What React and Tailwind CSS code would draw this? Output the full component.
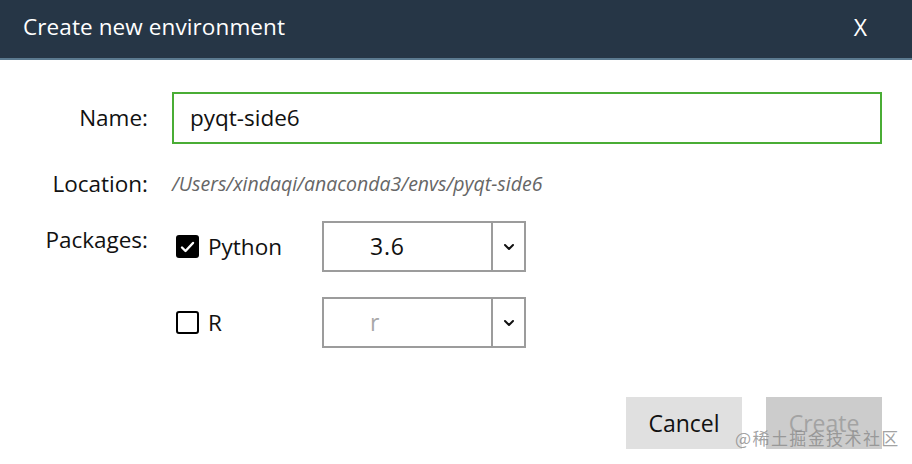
import React from "react";

const font = { fontFamily: '"Open Sans", "Noto Sans", sans-serif' };

function Chevron() {
  return (
    <svg width="12" height="8" viewBox="0 0 12 8" className="block">
      <path d="M2 2 L6 6 L10 2" fill="none" stroke="#111" strokeWidth="2" strokeLinecap="round" strokeLinejoin="round" />
    </svg>
  );
}

function Combo({ value, muted }) {
  return (
    <div className="flex w-[204px] h-[51px] border-2 border-[#9c9c9c] bg-white">
      <div className={"flex-1 flex items-center pl-[46px] text-[23px] tracking-[0.8px] " + (muted ? "text-[#a8a8a8]" : "text-[#111]")}>{value}</div>
      <div className="w-[33px] border-l-2 border-[#9c9c9c] flex items-center justify-center">
        <Chevron />
      </div>
    </div>
  );
}

export default function App() {
  return (
    <div className="relative w-[912px] h-[464px] bg-white overflow-hidden" style={font}>
      <div className="h-[60px] bg-[#263646] border-b-2 border-[#5b7a90] flex items-center justify-between pl-[23px] pr-[45px]">
        <span className="text-white text-[22.5px] leading-none tracking-[0.1px] pb-[4px]">Create new environment</span>
        <span className="text-white text-[23px] leading-none pb-[4px]">X</span>
      </div>

      <div className="pt-[32px] pr-[30px]">
        <div className="flex items-center h-[52px]">
          <div className="w-[148px] text-right text-[22.5px] text-[#111]">Name:</div>
          <div className="ml-[24px] flex-1 h-[52px] border-2 border-[#4aad35] flex items-center pl-[16px] text-[22.5px] text-[#111]">pyqt-side6</div>
        </div>

        <div className="flex items-center h-[40px] mt-[20px]">
          <div className="w-[148px] text-right text-[22.5px] text-[#111]">Location:</div>
          <div className="ml-[24px] text-[19.5px] italic text-[#666]">/Users/xindaqi/anaconda3/envs/pyqt-side6</div>
        </div>

        <div className="flex mt-[17px]">
          <div className="w-[148px] text-right text-[22.5px] text-[#111] pt-[4px] leading-[30px]">Packages:</div>
          <div className="ml-[28px] flex flex-col">
            <div className="flex items-center h-[51px]">
              <div className="w-[23px] h-[23px] rounded-[3px] bg-black flex items-center justify-center">
                <svg width="15" height="12" viewBox="0 0 15 12">
                  <path d="M2 6.5 L5.5 10 L13 2" fill="none" stroke="#fff" strokeWidth="2.4" strokeLinecap="round" strokeLinejoin="round" />
                </svg>
              </div>
              <span className="ml-[9px] w-[114px] text-[22.5px] text-[#111]">Python</span>
              <Combo value="3.6" />
            </div>
            <div className="flex items-center h-[51px] mt-[25px]">
              <div className="w-[23px] h-[23px] rounded-[3px] border-2 border-black bg-white" />
              <span className="ml-[9px] w-[114px] text-[22.5px] text-[#111]">R</span>
              <Combo value="r" muted />
            </div>
          </div>
        </div>

        <div className="flex justify-end gap-[24px] mt-[49px]">
          <div className="w-[116px] h-[52px] bg-[#e0e0e0] flex items-center justify-center text-[23px] text-[#111]">Cancel</div>
          <div className="w-[116px] h-[52px] bg-[#cccccc] flex items-center justify-center text-[23px] text-[#a3a3a3]">Create</div>
        </div>
      </div>

      <div
        className="absolute left-[735px] top-[427px] text-[17px] leading-[22px] text-[#8a8a8a]/80 tracking-[1.4px]"
        style={{ fontFamily: '"Noto Sans CJK SC", "Noto Sans", sans-serif' }}
      >
        @稀土掘金技术社区
      </div>
    </div>
  );
}
